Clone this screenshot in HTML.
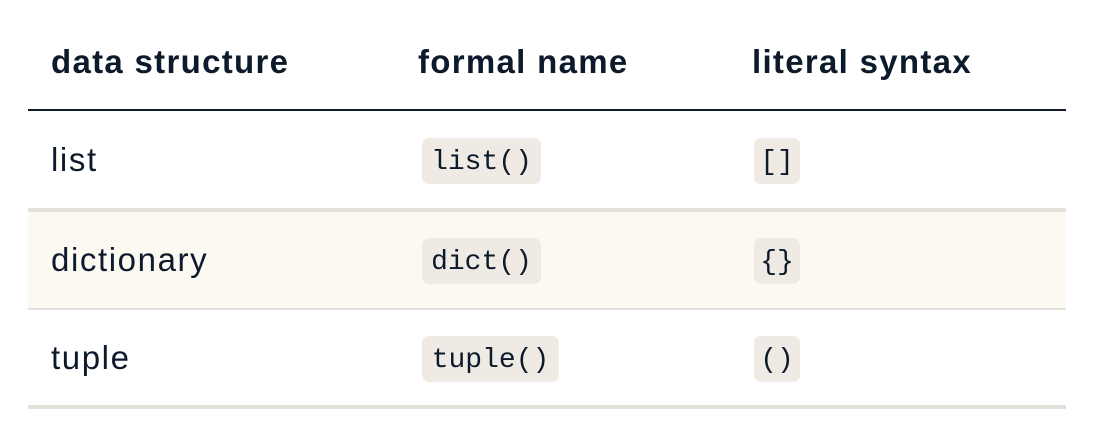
<!DOCTYPE html>
<html><head><style>
body{margin:0;background:#fff;width:1098px;height:440px;overflow:hidden;font-family:"Liberation Sans",sans-serif;color:#0d1a2b}
.h{position:absolute;top:40px;font-weight:bold;font-size:33px;line-height:44px;letter-spacing:1.3px}
.line{position:absolute;left:28px;width:1038px}
.c{position:absolute;font-size:33px;line-height:40px;letter-spacing:1.6px}
.k{position:absolute;background:#efebe4;border-radius:7px;height:46px;font-family:"Liberation Mono",monospace;font-size:28px;line-height:50px;text-align:center;box-sizing:border-box}
</style></head><body>
<div class="h" style="left:51px">data structure</div>
<div class="h" style="left:418px">formal name</div>
<div class="h" style="left:752px">literal syntax</div>
<div class="line" style="top:109px;height:2px;background:#0f1a2a"></div>
<div class="line" style="top:211px;height:97px;background:#fcf9f2"></div>
<div class="line" style="top:208px;height:4px;background:#e4e1da"></div>
<div class="line" style="top:308px;height:2px;background:#e4e1da"></div>
<div class="line" style="top:405px;height:4px;background:#e4e1da"></div>

<div class="c" style="left:51px;top:140px">list</div>
<div class="k" style="left:422px;top:138px;width:119px">list()</div>
<div class="k" style="left:754px;top:138px;width:46px">[]</div>

<div class="c" style="left:51px;top:240px">dictionary</div>
<div class="k" style="left:422px;top:238px;width:119px">dict()</div>
<div class="k" style="left:754px;top:238px;width:46px">{}</div>

<div class="c" style="left:51px;top:338px">tuple</div>
<div class="k" style="left:422px;top:336px;width:137px">tuple()</div>
<div class="k" style="left:754px;top:336px;width:46px">()</div>
</body></html>
